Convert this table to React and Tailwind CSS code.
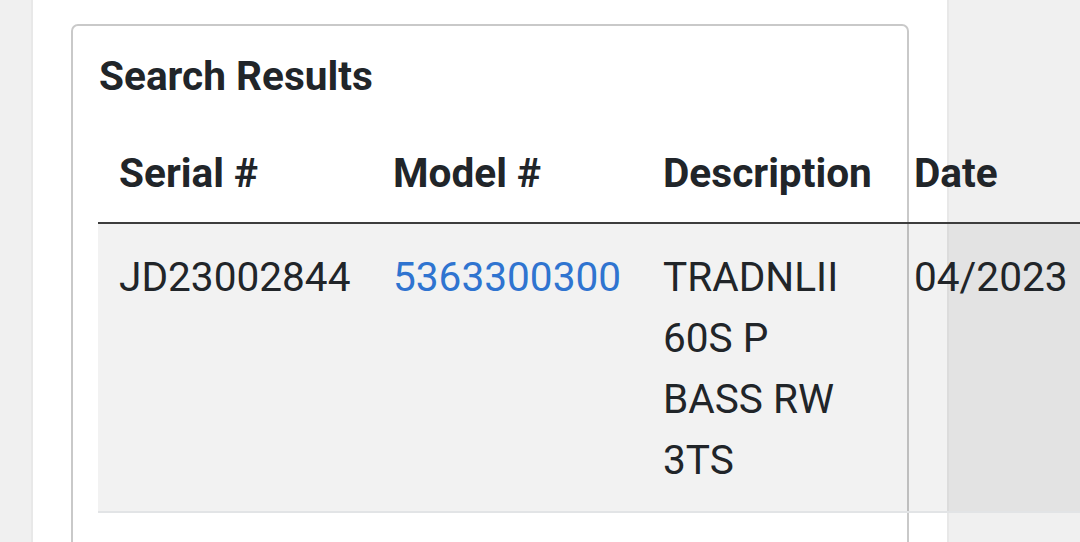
import React from 'react';

const rows = [
  {
    serial: 'JD23002844',
    model: '5363300300',
    description: 'TRADNLII 60S P BASS RW 3TS',
    date: '04/2023',
  },
];

const App = () => {
  return (
    <div
      className="w-[1080px] h-[542px] overflow-hidden bg-[#f0f0f0] flex text-[#212529]"
      style={{ fontFamily: 'Roboto, "Noto Sans", sans-serif' }}
    >
      <div className="ml-[31px] w-[918px] shrink-0 bg-white border-x-2 border-[#e8e8e8] pt-[24px] pl-[38px]">
        <div className="w-[838px] border-2 border-[#c9c9c9] rounded-[7px] pt-[26px] pl-[25px] pb-[200px]">
          <h2 className="text-[40.6px] leading-[48px] font-bold pl-[1px]">Search Results</h2>
          <table className="table-fixed w-[1020px] mt-[23px] border-collapse text-[40.6px]">
            <colgroup>
              <col className="w-[274px]" />
              <col className="w-[270px]" />
              <col className="w-[251px]" />
              <col className="w-[225px]" />
            </colgroup>
            <thead>
              <tr className="border-b-2 border-[#3d3d3d]">
                <th className="text-left font-bold leading-[48px] px-[21px] pt-[26px] pb-[25px]">Serial #</th>
                <th className="text-left font-bold leading-[48px] px-[21px] pt-[26px] pb-[25px]">Model #</th>
                <th className="text-left font-bold leading-[48px] px-[21px] pt-[26px] pb-[25px]">Description</th>
                <th className="text-left font-bold leading-[48px] px-[21px] pt-[26px] pb-[25px]">Date</th>
              </tr>
            </thead>
            <tbody>
              {rows.map((r) => (
                <tr key={r.serial} className="bg-black/5 border-b-2 border-[#e2e4e6]">
                  <td className="align-top leading-[61px] px-[21px] pt-[23px] pb-[20px]">{r.serial}</td>
                  <td className="align-top leading-[61px] px-[21px] pt-[23px] pb-[20px]">
                    <a href="#" className="text-[#2f74d0]">{r.model}</a>
                  </td>
                  <td className="align-top leading-[61px] px-[21px] pt-[23px] pb-[20px]">{r.description}</td>
                  <td className="align-top leading-[61px] px-[21px] pt-[23px] pb-[20px]">{r.date}</td>
                </tr>
              ))}
            </tbody>
          </table>
        </div>
      </div>
    </div>
  );
};

export default App;
